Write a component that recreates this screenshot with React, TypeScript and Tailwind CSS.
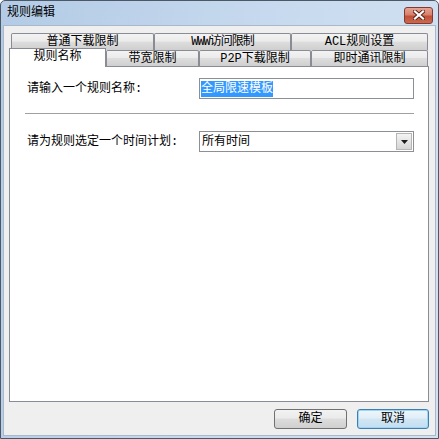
import React from 'react'

const font = { fontFamily: '"Liberation Mono", "Noto Sans CJK SC", sans-serif' }

function Tab({ label, w, h = 'h-[17px]' }: { label: React.ReactNode; w: string; h?: string }) {
  return (
    <div
      className={`${w} ${h} shrink-0 flex items-center justify-center border border-b-0 border-[#898c95] rounded-t-[2px] bg-[linear-gradient(#f3f3f3,#ebebeb_45%,#dddddd_50%,#cfcfcf)] text-[12px] leading-none text-black`}
    >
      {label}
    </div>
  )
}

export default function App() {
  return (
    <div style={font} className="w-[439px] h-[439px] border border-[#4d5866] rounded-t-[5px] bg-[linear-gradient(100deg,#b3cbe6,#c9dbef_60%,#d3e2f2)] flex flex-col overflow-hidden">
      {/* title */}
      <div className="h-[24px] flex items-center justify-between pl-[6px] pr-[5px]">
        <span className="text-[12px] leading-none text-black">规则编辑</span>
        <div className="w-[29px] h-[17px] mt-[4px] rounded-[3px] border border-[#7e3a33] bg-[linear-gradient(#e8a493,#d7806c_45%,#c24f38_55%,#c96a4e)] flex items-center justify-center">
          <svg width="12" height="10" viewBox="0 0 12 10">
            <path d="M2 1.5 L10 8.5 M10 1.5 L2 8.5" stroke="#5a2018" strokeWidth="4" strokeLinecap="square" />
            <path d="M2 1.5 L10 8.5 M10 1.5 L2 8.5" stroke="#ffffff" strokeWidth="2.2" strokeLinecap="square" />
          </svg>
        </div>
      </div>

      {/* client */}
      <div className="flex-1 mx-[2px] mb-[2px] bg-[#efefef] border border-[#a9b9ca] pl-[5px] pr-[6px] pt-[7px] flex flex-col">
        {/* tab rows */}
        <div className="flex ml-[2px]">
          <Tab w="w-[143px]" label="普通下载限制" />
          <Tab w="w-[137px]" label={<span className="tracking-[-1px]">WWW访问限制</span>} />
          <Tab w="w-[137px]" label="ACL规则设置" />
        </div>
        <div className="flex items-end h-[16px]">
          <div className="relative z-10 w-[97px] h-[19px] -mb-px shrink-0 flex items-center justify-center pb-[2px] border border-b-0 border-[#898c95] bg-white text-[12px] leading-none text-black">
            规则名称
          </div>
          <Tab w="w-[93px]" h="h-[16px]" label="带宽限制" />
          <Tab w="w-[112px]" h="h-[16px]" label="P2P下载限制" />
          <Tab w="w-[117px]" h="h-[16px]" label="即时通讯限制" />
        </div>

        {/* panel */}
        <div className="h-[336px] border border-[#898c95] bg-white flex flex-col pt-[11px]">
          <div className="flex items-center h-[21px] pl-[17px]">
            <span className="w-[172px] text-[12px] leading-none text-black">请输入一个规则名称:</span>
            <div className="w-[215px] h-[21px] border border-[#8c8f94] flex items-center pl-[1px]">
              <span className="bg-[#3399ff] text-white text-[12px] leading-[16px] h-[16px]">全局限速模板</span>
            </div>
          </div>
          <div className="mt-[14px] ml-[15px] w-[389px] border-t border-[#a0a0a0]" />
          <div className="mt-[17px] flex items-center h-[21px] pl-[17px]">
            <span className="w-[172px] text-[12px] leading-none text-black">请为规则选定一个时间计划:</span>
            <div className="w-[215px] h-[21px] border border-[#8c8f94] flex items-center justify-between pl-[2px] pr-px">
              <span className="text-[12px] leading-none text-black">所有时间</span>
              <div className="w-[16px] h-[17px] border border-[#b5b5b5] bg-[linear-gradient(#f4f4f4,#e4e4e4_50%,#d4d4d4)] flex items-center justify-center">
                <svg width="7" height="4" viewBox="0 0 7 4">
                  <path d="M0 0 H7 L3.5 4 Z" fill="#1a1a1a" />
                </svg>
              </div>
            </div>
          </div>
        </div>

        {/* buttons */}
        <div className="flex justify-end gap-[10px] mt-[7px]">
          <div className="w-[73px] h-[20px] rounded-[3px] border border-[#707070] bg-[linear-gradient(#f2f2f2,#ebebeb_45%,#dddddd_50%,#cfcfcf)] flex items-center justify-center text-[12px] leading-none text-black">
            确定
          </div>
          <div className="w-[72px] h-[20px] rounded-[3px] border border-[#3c7fb1] shadow-[inset_0_0_0_1px_#9fd5f5] bg-[linear-gradient(#eef6fb,#e1eef7_45%,#d1e6f4_50%,#c3ddf0)] flex items-center justify-center text-[12px] leading-none text-black">
            取消
          </div>
        </div>
      </div>
    </div>
  )
}
